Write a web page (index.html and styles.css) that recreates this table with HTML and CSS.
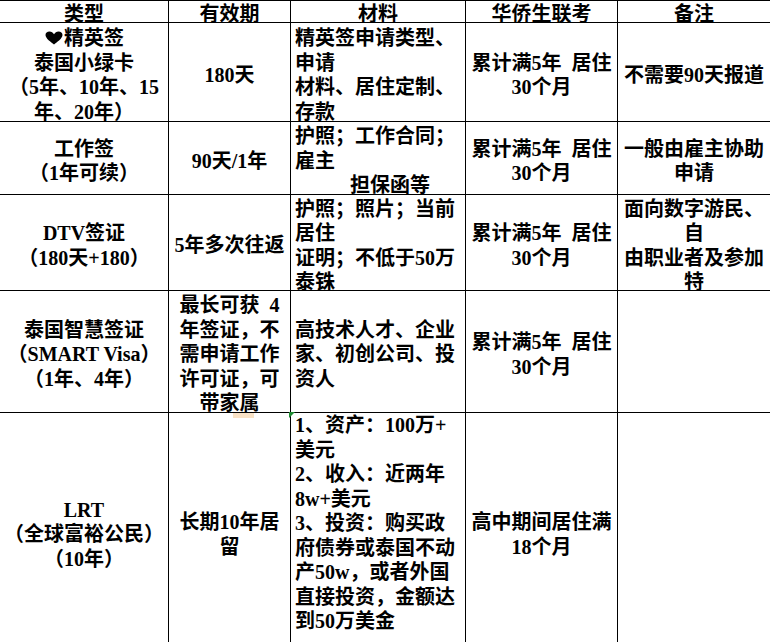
FILE: index.html
```html
<!DOCTYPE html>
<html lang="zh-CN">
<head>
<meta charset="utf-8">
<title>泰国签证对比</title>
<link rel="stylesheet" href="styles.css">
</head>
<body>
<div class="sheet">
  <div class="cell head"><div>类型</div></div>
  <div class="cell head"><div>有效期</div></div>
  <div class="cell head"><div>材料</div></div>
  <div class="cell head"><div>华侨生联考</div></div>
  <div class="cell head"><div>备注</div></div>

  <div class="cell"><div><svg class="heart" width="20" height="20" viewBox="0 0 20 20"><path d="M10 16.5 C7 14 1.5 10.5 1.5 7 C1.5 4.8 3.2 3.5 5.5 3.5 C7.5 3.5 9 4.8 10 6.3 C11 4.8 12.5 3.5 14.5 3.5 C16.8 3.5 18.5 4.8 18.5 7 C18.5 10.5 13 14 10 16.5 Z" fill="#000"/></svg>精英签<br>泰国小绿卡<br>（5年、10年、15<br>年、20年）</div></div>
  <div class="cell"><div>180天</div></div>
  <div class="cell mat"><div>精英签申请类型、<br>申请<br>材料、居住定制、<br>存款</div></div>
  <div class="cell"><div>累计满5年&ensp;居住<br>30个月</div></div>
  <div class="cell"><div>不需要90天报道</div></div>

  <div class="cell"><div>工作签<br>（1年可续）</div></div>
  <div class="cell"><div>90天/1年</div></div>
  <div class="cell mat"><div>护照；工作合同；<br>雇主<br><span class="indent">担保函等</span></div></div>
  <div class="cell"><div>累计满5年&ensp;居住<br>30个月</div></div>
  <div class="cell"><div>一般由雇主协助<br>申请</div></div>

  <div class="cell"><div>DTV签证<br>（180天+180）</div></div>
  <div class="cell"><div>5年多次往返</div></div>
  <div class="cell mat"><div>护照；照片；当前<br>居住<br>证明；不低于50万<br>泰铢</div></div>
  <div class="cell"><div>累计满5年&ensp;居住<br>30个月</div></div>
  <div class="cell"><div>面向数字游民、<br>自<br>由职业者及参加<br>特</div></div>

  <div class="cell"><div>泰国智慧签证<br>（SMART Visa）<br>（1年、4年）</div></div>
  <div class="cell"><div>最长可获&ensp;4<br>年签证，不<br>需申请工作<br>许可证，可<br>带家属</div></div>
  <div class="cell mat"><div>高技术人才、企业<br>家、初创公司、投<br>资人</div></div>
  <div class="cell"><div>累计满5年&ensp;居住<br>30个月</div></div>
  <div class="cell"><div></div></div>

  <div class="cell"><div>LRT<br>（全球富裕公民）<br>（10年）</div></div>
  <div class="cell"><span class="fill-mark"></span><div>长期10年居<br>留</div></div>
  <div class="cell mat top"><span class="err-mark"></span><div>1、资产：100万+<br>美元<br>2、收入：近两年<br>8w+美元<br>3、投资：购买政<br>府债券或泰国不动<br>产50w，或者外国<br>直接投资，金额达<br>到50万美金</div></div>
  <div class="cell"><div>高中期间居住满<br>18个月</div></div>
  <div class="cell"><div></div></div>
</div>
</body>
</html>
```

FILE: styles.css
```css
html, body {
  margin: 0;
  padding: 0;
  background: #fff;
  overflow: hidden;
}

body {
  font-family: "Liberation Serif", "Noto Sans CJK SC", serif;
  font-weight: 700;
  font-size: 20px;
  color: #000;
}

.sheet {
  display: grid;
  grid-template-columns: 169px 122px 175px 152px 152px;
  grid-template-rows: 22px 99px 73px 96px 122px 238px;
  width: 770px;
  border-top: 1px solid #000;
}

.cell {
  box-sizing: border-box;
  position: relative;
  min-width: 0;
  display: flex;
  flex-direction: column;
  justify-content: center;
  align-items: center;
  text-align: center;
  line-height: 24.5px;
  padding-top: 6px;
  border-right: 1px solid #000;
  border-bottom: 1px solid #000;
  white-space: nowrap;
}

.cell:nth-child(5n) {
  border-right: none;
}

.cell.mat {
  align-items: flex-start;
  text-align: left;
  padding-left: 4px;
}

.cell.head {
  align-items: center;
  text-align: center;
  padding: 6px 0 0;
  line-height: 21px;
}

.cell.top {
  justify-content: flex-start;
  padding-top: 0;
}

.heart {
  vertical-align: -3px;
}

.indent {
  padding-left: 55px;
}

.fill-mark {
  position: absolute;
  top: 0;
  left: 64px;
  width: 21px;
  height: 5px;
  background: #f9e2c6;
}

.err-mark {
  position: absolute;
  top: -1px;
  left: -2px;
  width: 0;
  height: 0;
  border-top: 6px solid #1f8a32;
  border-right: 6px solid transparent;
}
```
